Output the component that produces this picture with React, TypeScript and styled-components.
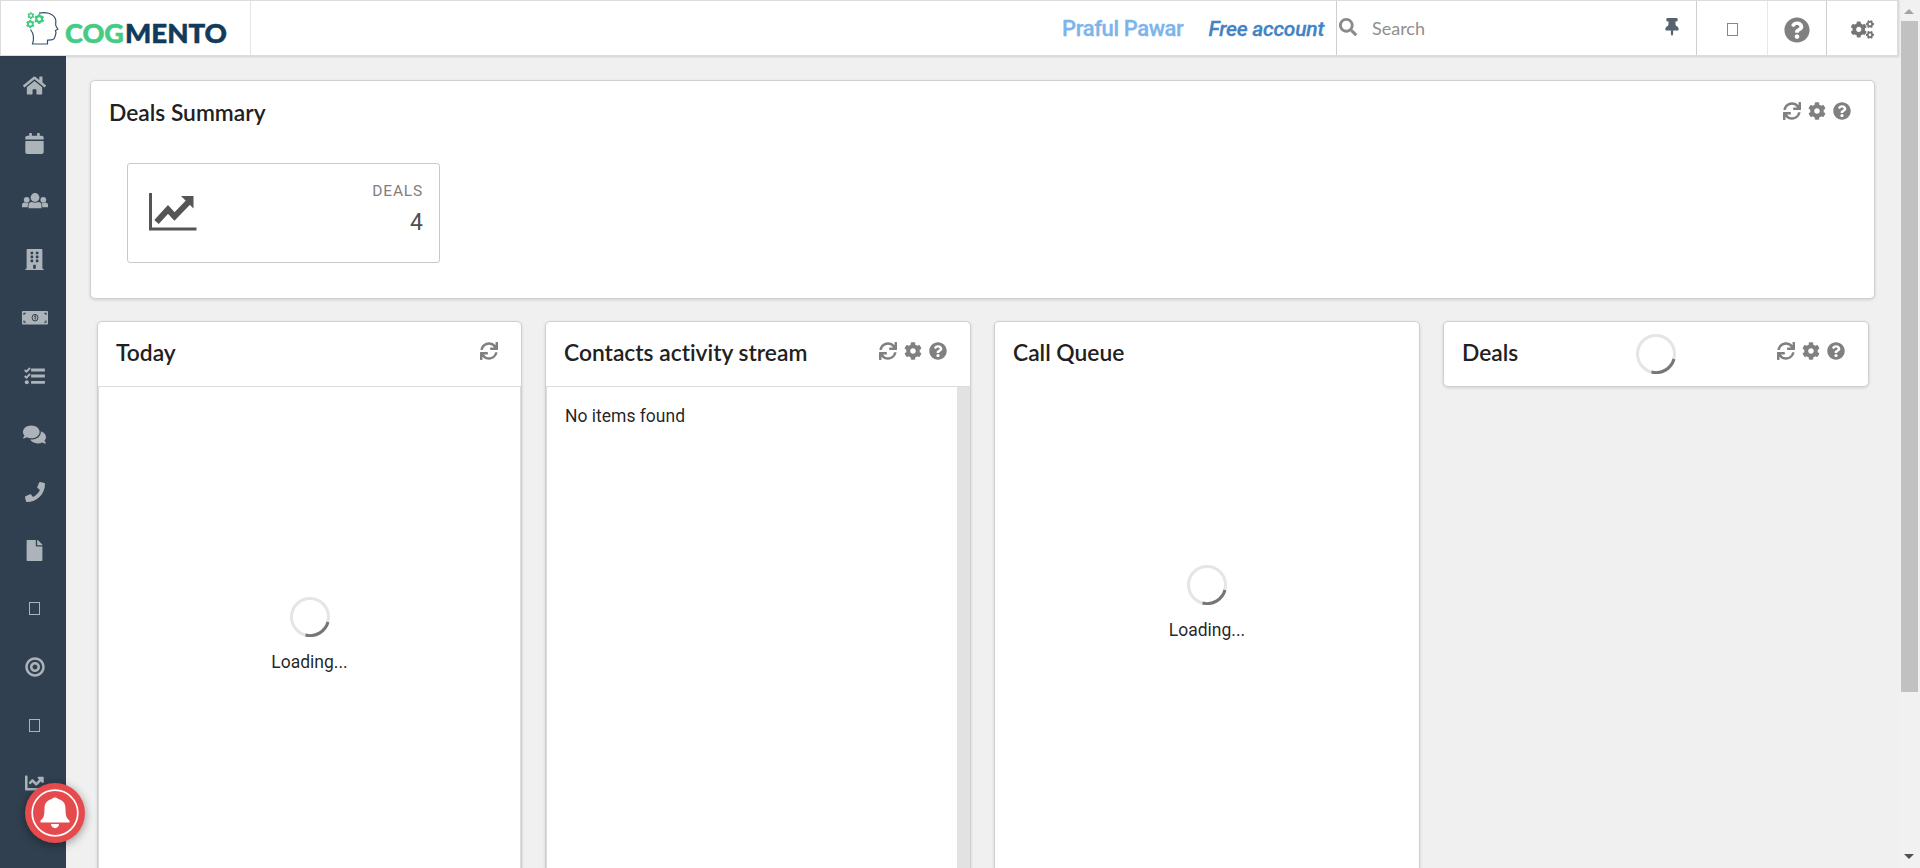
import React from 'react';
import styled, { createGlobalStyle } from 'styled-components';
import {
  FaHome, FaCalendar, FaBuilding, FaComments, FaPhone, FaFile, FaBullseye, FaChartLine,
  FaSync, FaCog, FaQuestionCircle, FaCogs, FaThumbtack, FaSearch,
} from 'react-icons/fa';

const Global = createGlobalStyle`
  * { box-sizing: border-box; }
  body { margin: 0; overflow: hidden; background: #f0f0f0; font-family: Roboto, sans-serif; color: rgba(0,0,0,.87); }
`;

const Page = styled.div`
  display: flex;
  height: 868px;
  overflow: hidden;
`;
const Shell = styled.div`
  flex: 1;
  min-width: 0;
  display: flex;
  flex-direction: column;
`;
const TopBar = styled.header`
  height: 56px;
  flex: none;
  display: flex;
  width: 1899px;
  background: #fff;
  border: 1px solid #dcdcdc;
  border-right-width: 2px;
  box-shadow: 0 1px 2px rgba(34,36,38,.15);
  position: relative;
  z-index: 2;
`;
const Brand = styled.div`
  width: 250px;
  border-right: 1px solid #e4e4e4;
  display: flex;
  padding: 10px 0 0 24px;
`;
const BrandName = styled.div`
  display: flex;
  padding-top: 7px;
  margin-left: 4px;
  svg { display: block; overflow: visible; }
`;
const Account = styled.div`
  flex: 1;
  display: flex;
  justify-content: flex-end;
  align-items: center;
  padding: 1px 12px 0 0;
  gap: 25px;
`;
const UserName = styled.span`
  font: 500 22px Roboto, sans-serif;
  letter-spacing: -.4px;
  color: #7cb4ec;
  -webkit-text-stroke: .3px #7cb4ec;
  white-space: nowrap;
`;
const Plan = styled.span`
  font: italic 500 21px Roboto, sans-serif;
  letter-spacing: -.22px;
  color: #4183c4;
  -webkit-text-stroke: .3px #4183c4;
  white-space: nowrap;
`;
const SearchBox = styled.div`
  width: 360px;
  border-left: 1px solid #cfcfcf;
  display: flex;
  align-items: center;
  color: #8a8a8a;
  font: 18px Lato, sans-serif;
  padding: 0 15px 2px 2px;
  span { margin-left: 15px; flex: 1; padding-top: 2px; color: #8f8f8f; }
`;
const BarCell = styled.div<{ $w: number; $soft?: boolean }>`
  width: ${p => p.$w}px;
  flex: none;
  border-left: 1px solid ${p => (p.$soft ? '#e8e8e8' : '#cfcfcf')};
  display: flex;
  align-items: center;
  justify-content: center;
  color: #767676;
  padding-top: 3px;
`;
const Missing = styled.i<{ $c: string }>`
  display: block;
  width: 11px;
  height: 13px;
  border: 1px solid ${p => p.$c};
`;
const Body = styled.div`
  flex: 1;
  min-height: 0;
  display: flex;
`;
const SideBar = styled.nav`
  width: 66px;
  flex: none;
  background: #304050;
  padding: 0 0 0 3px;
`;
const SideItem = styled.div`
  height: 58.2px;
  display: flex;
  align-items: center;
  justify-content: center;
  color: #acb3b9;
`;
const Content = styled.main`
  flex: 1;
  padding: 24px 24px 0;
`;
const cardEdge = `
  background: #fff;
  border: 1px solid #d0d0d1;
  border-radius: 5px;
  box-shadow: 0 1px 3px rgba(34,36,38,.15);
`;
const Summary = styled.section`
  ${cardEdge}
  height: 219px;
  width: 1785px;
`;
const CardHead = styled.div<{ $line?: boolean; $raised?: boolean }>`
  height: 65px;
  display: flex;
  align-items: center;
  justify-content: space-between;
  padding: 0 23px ${p => (p.$raised ? 4 : 2)}px 18px;
  border-bottom: 1px solid ${p => (p.$line ? '#dcdcdc' : 'transparent')};
`;
const Title = styled.h2`
  margin: 0;
  font: 600 22.8px Lato, sans-serif;
  font-variant-ligatures: none;
  color: #212121;
  white-space: nowrap;
`;
const Tools = styled.div`
  display: flex;
  gap: 7px;
  color: #808080;
  padding-bottom: 2px;
`;
const Centered = styled.div`
  flex: 1;
  display: flex;
  justify-content: center;
  padding: 3px 0 0 16px;
`;
const Stat = styled.div`
  width: 313px;
  height: 100px;
  margin: 17px 0 0 36px;
  border: 1px solid #c9c9c9;
  border-radius: 3px;
  display: flex;
  justify-content: space-between;
  padding: 18px 16px 0 21px;
  > svg { margin-top: 11px; }
`;
const StatText = styled.div`
  text-align: right;
`;
const StatLabel = styled.div`
  font: 15.5px/18px Roboto, sans-serif;
  letter-spacing: .8px;
  color: #808080;
`;
const StatValue = styled.div`
  font: 23px/28px Roboto, sans-serif;
  color: #505050;
  margin-top: 9px;
`;
const Columns = styled.div`
  display: grid;
  grid-template-columns: 425px repeat(3, 426px);
  column-gap: 23px;
  align-items: start;
  padding: 22px 0 0 7px;
`;
const Column = styled.section<{ $tall?: boolean }>`
  ${cardEdge}
  height: ${p => (p.$tall ? '600px' : '66px')};
`;
const ColumnBody = styled.div<{ $track?: boolean }>`
  height: 534px;
  border: solid #dcdcdc;
  border-width: 0 1px;
  ${p => p.$track && 'border-right: 13px solid #e2e2e2;'}
  padding: 19px 18px;
  font: 17.5px/21px Roboto, sans-serif;
`;
const Loader = styled.div<{ $top: number }>`
  padding-top: ${p => p.$top}px;
  display: flex;
  flex-direction: column;
  align-items: center;
  gap: 15px;
  font: 17.5px/21px Roboto, sans-serif;
`;
const ScrollBar = styled.aside`
  width: 20px;
  background: #f1f1f1;
  display: flex;
  flex-direction: column;
  align-items: center;
  padding: 9px 2px 9px 0;
`;
const Thumb = styled.div`
  width: 17px;
  height: 671px;
  margin: 7px 0 auto;
  background: #c1c1c1;
`;
const Arrow = styled.i<{ $down?: boolean }>`
  border: solid transparent;
  border-width: 0 5px;
  ${p => (p.$down ? 'border-top: 5px solid #505050;' : 'border-bottom: 5px solid #a3a3a3;')}
`;
const Alert = styled.button`
  position: absolute;
  left: 25px;
  top: 783px;
  z-index: 5;
  width: 60px;
  height: 60px;
  padding: 0;
  border: 0;
  border-radius: 50%;
  background: #e54b4d;
  box-shadow: 0 2px 10px rgba(0,0,0,.4);
  display: grid;
  place-items: center;
`;

const BellMark = () => (
  <svg width="48" height="48" viewBox="0 0 48 48" fill="#fff">
    <circle cx="24" cy="24" r="22.800" fill="none" stroke="#fff" strokeWidth="1.700" />
    <path d="M24 8.500C25.300 8.500 26.500 9 27 10C32 11 34.500 14.500 34.500 19.500C34.500 27 35.500 29.500 38.500 31.500V33.500H9.500V31.500C12.500 29.500 13.500 27 13.500 19.500C13.500 14.500 16 11 21 10C21.500 9 22.700 8.500 24 8.500Z" />
    <path d="M20 35H28C28 40.500 20 40.500 20 35Z" />
  </svg>
);

const Spinner = () => (
  <svg width="40" height="40" viewBox="0 0 40 40" fill="none" strokeWidth="3">
    <circle cx="20" cy="20" r="18.5" stroke="#e5e5e5" />
    <path d="M38 25A18.5 18.5 0 0 1 15.5 38" stroke="#767676" />
  </svg>
);

const teeth = [0, 60, 120, 180, 240, 300];
const Gear = ({ x, y, r }: { x: number; y: number; r: number }) => (
  <g transform={`translate(${x} ${y}) scale(${r / 4})`} stroke="#3fcb80" fill="none">
    <circle r="2.7" strokeWidth="2" />
    {teeth.map(a => (
      <path key={a} d="M0-3V-4.7" strokeWidth="2.2" transform={`rotate(${a})`} />
    ))}
  </g>
);
const Head = () => (
  <svg width="36" height="36" viewBox="0 0 36 36">
    <path
      d="M14 2.200C20 .6 28 2 30.500 8C31.500 11 30 13.500 31 15L32.800 18.300L30.500 19.500L31 22L30 25.500C29.500 29 27 29 22.500 29.200V33H7.500C9.500 27 9 23 5.500 18.500"
      stroke="#365270" strokeWidth="1.2" fill="none"
    />
    <Gear x={5.8} y={4.6} r={2.9} />
    <Gear x={14.2} y={8} r={4.2} />
    <Gear x={5.3} y={13} r={3.6} />
  </svg>
);
const Wordmark = () => (
  <svg width="164" height="30" viewBox="0 0 164 30" fontFamily="Lato, sans-serif" fontWeight="900" fontSize="26" strokeWidth=".5">
    <text x="0" y="25" textLength="59" lengthAdjust="spacingAndGlyphs" fill="#44cc84" stroke="#44cc84">COG</text>
    <text x="60" y="25" textLength="102" lengthAdjust="spacingAndGlyphs" fill="#123a5a" stroke="#123a5a">MENTO</text>
  </svg>
);
const Trend = () => (
  <svg width="48" height="40" viewBox="0 0 48 40" fill="none" stroke="#555">
    <path d="M1.500 0V36H47.500" strokeWidth="3" />
    <path d="M7.500 29L19 16.500L25.500 23.500L40 8.500" strokeWidth="6" />
    <path d="M32 3H44.500V15.500Z" fill="#555" stroke="none" />
  </svg>
);

const People = () => (
  <svg width="26" height="16" viewBox="0 0 26 16" fill="currentColor">
    <circle cx="13" cy="4.500" r="4.400" />
    <circle cx="4.700" cy="6.800" r="2.900" />
    <circle cx="21.300" cy="6.800" r="2.900" />
    <path d="M6.500 15.300V12C6.500 10 8 9 10 8.900Q13 10.500 16 8.900C18 9 19.500 10 19.500 12V15.300Z" />
    <path d="M0 14.300V12C0 10.500 1 9.800 2.600 9.600Q4.500 10.600 6.400 9.800Q5.700 11 5.700 14.300ZM26 14.300V12C26 10.500 25 9.800 23.400 9.600Q21.500 10.600 19.600 9.800Q20.300 11 20.300 14.300Z" />
  </svg>
);
const Banknote = () => (
  <svg width="26" height="14" viewBox="0 0 26 14">
    <rect width="26" height="13.500" rx="1" fill="currentColor" />
    <ellipse cx="13" cy="6.700" rx="2.900" ry="3.300" fill="none" stroke="#304050" strokeWidth="1" />
    <path d="M12.300 5.500L13.200 5V8.500M2 4V2.200H3.800M22.200 2.200H24V4M2 9.500V11.300H3.800M22.200 11.300H24V9.500" fill="none" stroke="#304050" strokeWidth="1.100" />
  </svg>
);
const Checklist = () => (
  <svg width="21" height="18" viewBox="0 0 21 18" fill="none" stroke="currentColor">
    <path d="M8.500 3H19.500M8.500 9H19.500M8.500 15.300H19.500" strokeWidth="2.800" strokeLinecap="square" />
    <path d="M.7 3L2.500 4.700L6 1M.7 9L2.500 10.700L6 7" strokeWidth="1.900" />
    <circle cx="2.800" cy="15.300" r="2" fill="currentColor" stroke="none" />
  </svg>
);

const AllTools = () => (
  <Tools><FaSync size={18} /><FaCog size={18} /><FaQuestionCircle size={18} /></Tools>
);

const sideIcons = [
  <FaHome size={23} />, <FaCalendar size={21} />, <People />, <FaBuilding size={21} />,
  <Banknote />, <Checklist />, <FaComments size={23} />, <FaPhone size={20} />,
  <FaFile size={21} />, <Missing $c="#acb3b9" />, <FaBullseye size={20} />, <Missing $c="#acb3b9" />,
  <FaChartLine size={20} />,
];

export default function App() {
  return (
    <Page>
      <Global />
      <Shell>
        <TopBar>
          <Brand><Head /><BrandName><Wordmark /></BrandName></Brand>
          <Account><UserName>Praful Pawar</UserName><Plan>Free account</Plan></Account>
          <SearchBox><FaSearch size={18} /><span>Search</span><FaThumbtack size={18} color="#56636f" /></SearchBox>
          <BarCell $w={71}><Missing $c="#888" /></BarCell>
          <BarCell $w={59} $soft><FaQuestionCircle size={26} color="#808080" /></BarCell>
          <BarCell $w={71}><FaCogs size={23} /></BarCell>
        </TopBar>
        <Body>
          <SideBar>{sideIcons.map((icon, i) => <SideItem key={i}>{icon}</SideItem>)}</SideBar>
          <Content>
            <Summary>
              <CardHead><Title>Deals Summary</Title><AllTools /></CardHead>
              <Stat>
                <Trend />
                <StatText><StatLabel>DEALS</StatLabel><StatValue>4</StatValue></StatText>
              </Stat>
            </Summary>
            <Columns>
              <Column $tall>
                <CardHead $line $raised><Title>Today</Title><Tools><FaSync size={18} /></Tools></CardHead>
                <ColumnBody><Loader $top={191}><Spinner />Loading...</Loader></ColumnBody>
              </Column>
              <Column $tall>
                <CardHead $line $raised><Title>Contacts activity stream</Title><AllTools /></CardHead>
                <ColumnBody $track>No items found</ColumnBody>
              </Column>
              <Column $tall>
                <CardHead $raised><Title>Call Queue</Title></CardHead>
                <Loader $top={178}><Spinner />Loading...</Loader>
              </Column>
              <Column>
                <CardHead $raised><Title>Deals</Title><Centered><Spinner /></Centered><AllTools /></CardHead>
              </Column>
            </Columns>
          </Content>
        </Body>
      </Shell>
      <ScrollBar><Arrow /><Thumb /><Arrow $down /></ScrollBar>
      <Alert><BellMark /></Alert>
    </Page>
  );
}
